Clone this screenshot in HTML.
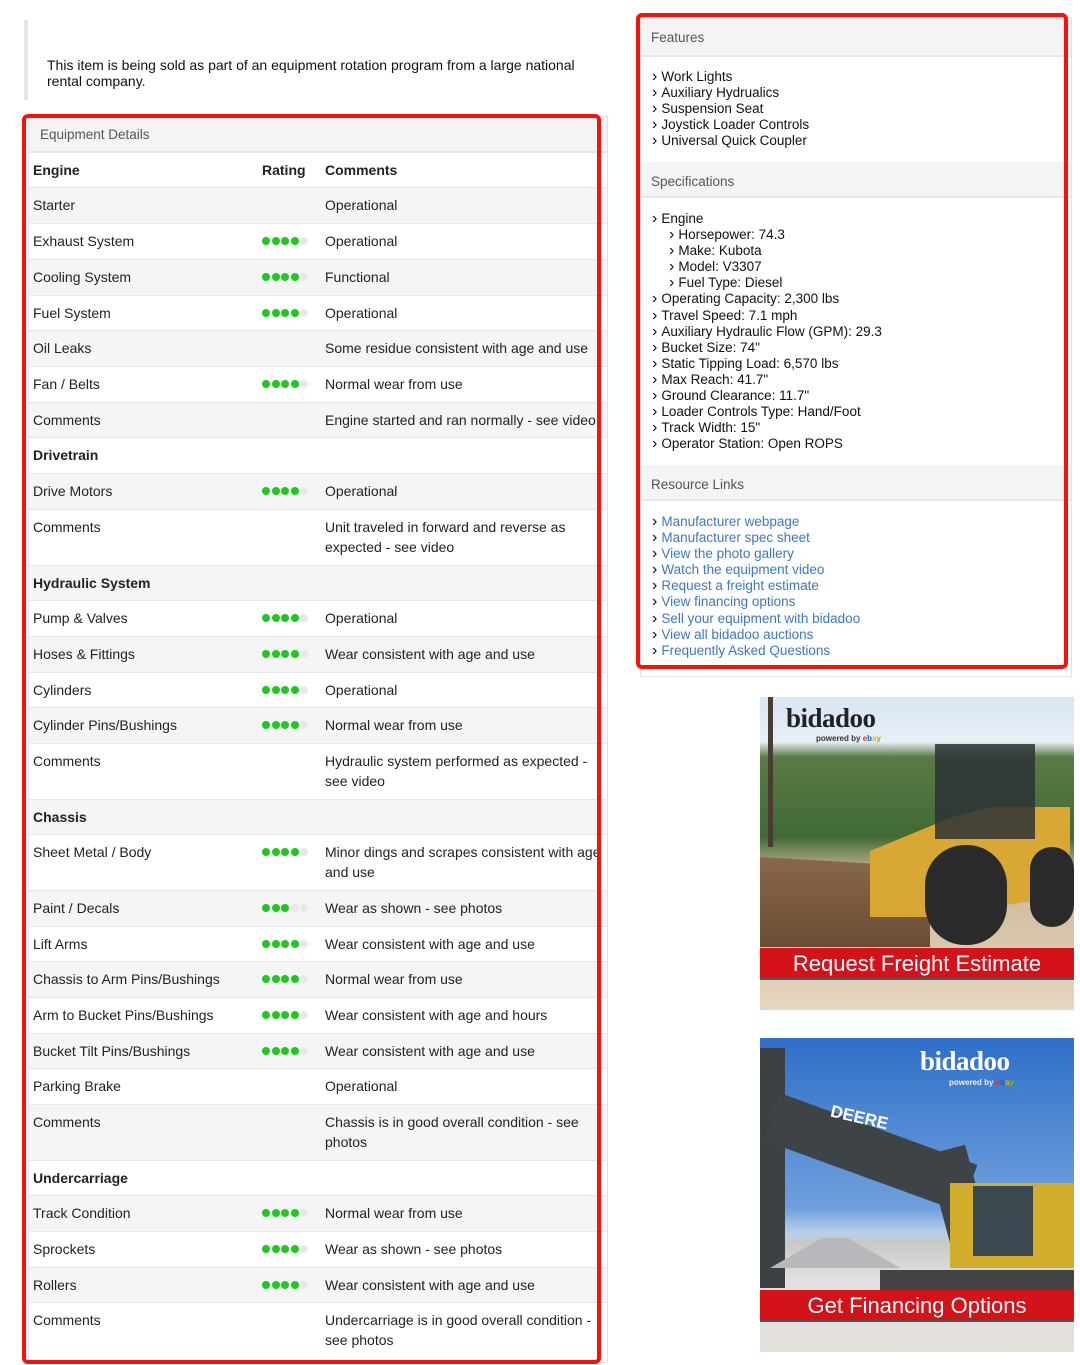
<!DOCTYPE html>
<html><head><meta charset="utf-8"><style>
*{box-sizing:border-box;margin:0;padding:0}
body{width:1080px;height:1365px;background:#fff;font-family:"Liberation Sans",sans-serif;color:#222;position:relative;overflow:hidden;font-size:14px}
.abs{position:absolute}
.intro{left:24px;top:20px;width:4px;height:80px;background:#e6e6e6}
.introt{left:47px;top:57px;width:560px;font-size:14px;line-height:16px;color:#111}
.eq{left:28px;top:116px;width:580px;height:1247px;border:1px solid #e2e2e2;overflow:hidden}
.ph{height:36px;background:#f4f4f4;border-bottom:2px solid #e4e4e4;color:#555;font-size:13.5px;padding:10px 0 0 11px}
.r{position:relative;height:36px;border-top:1px solid #e6e6e6;padding:7px 0 0 4px;line-height:20px;font-size:14px;white-space:nowrap}
.r.g{background:#f5f5f5}
.r.t{height:56px}
.r b{font-weight:bold}
.r .c{position:absolute;left:296px;top:7px;width:268px;white-space:normal}
.r .d{position:absolute;left:233px;top:13px}
.d i{display:inline-block;width:8px;height:8px;border-radius:50%;background:#1ec81e;margin-right:1.5px;vertical-align:top}
.d i.o{background:#e8e8e8}
.red{border:4px solid #f2140c;border-radius:6px}
.rp{left:640px;top:17px;width:432px;height:660px;border:1px solid #e2e2e2;overflow:hidden}
.rh{height:36px;background:#f4f4f4;border-bottom:2px solid #e6e6e6;color:#555;font-size:13.5px;padding:12px 0 0 10px}
.ls{padding:13px 0 12px 11px;font-size:13.5px;color:#111}
.ls div{height:16.1px;line-height:16.1px;white-space:nowrap}
.ls div::before{content:"›";font-size:16px;line-height:16px;margin-right:4px}
.ls .in{padding-left:17px}
.ls a{color:#3b78c0;text-decoration:none}
.img{overflow:hidden}
.band{position:absolute;left:0;width:100%;height:32px;background:#d3121a;color:#fff;text-align:center;font-size:22px;line-height:32px;border-bottom:2px solid #555}
.logo{position:absolute;font-family:"Liberation Serif",serif;font-weight:bold;font-size:27px;letter-spacing:-0.5px}
.pb{position:absolute;font-size:8px;font-weight:bold}
</style></head><body>
<div class="abs intro"></div>
<div class="abs introt">This item is being sold as part of an equipment rotation program from a large national rental company.</div>

<div class="abs eq">
<div class="ph">Equipment Details</div>
<div class="r" style="height:34px;border-top:none"><b>Engine</b><b class="d" style="top:7px;left:233px">Rating</b><b class="c">Comments</b></div>
<div class="r g">Starter<span class="c">Operational</span></div>
<div class="r">Exhaust System<span class="d"><i></i><i></i><i></i><i></i><i class="o"></i></span><span class="c">Operational</span></div>
<div class="r g">Cooling System<span class="d"><i></i><i></i><i></i><i></i><i class="o"></i></span><span class="c">Functional</span></div>
<div class="r" style="height:35px">Fuel System<span class="d"><i></i><i></i><i></i><i></i><i class="o"></i></span><span class="c">Operational</span></div>
<div class="r g">Oil Leaks<span class="c" style="width:300px">Some residue consistent with age and use</span></div>
<div class="r">Fan / Belts<span class="d"><i></i><i></i><i></i><i></i><i class="o"></i></span><span class="c">Normal wear from use</span></div>
<div class="r g" style="height:35px">Comments<span class="c" style="white-space:nowrap">Engine started and ran normally - see video</span></div>
<div class="r"><b>Drivetrain</b></div>
<div class="r g">Drive Motors<span class="d"><i></i><i></i><i></i><i></i><i class="o"></i></span><span class="c">Operational</span></div>
<div class="r t">Comments<span class="c">Unit traveled in forward and reverse as expected - see video</span></div>
<div class="r g" style="height:35px"><b>Hydraulic System</b></div>
<div class="r">Pump &amp; Valves<span class="d"><i></i><i></i><i></i><i></i><i class="o"></i></span><span class="c">Operational</span></div>
<div class="r g">Hoses &amp; Fittings<span class="d"><i></i><i></i><i></i><i></i><i class="o"></i></span><span class="c">Wear consistent with age and use</span></div>
<div class="r" style="height:35px">Cylinders<span class="d"><i></i><i></i><i></i><i></i><i class="o"></i></span><span class="c">Operational</span></div>
<div class="r g">Cylinder Pins/Bushings<span class="d"><i></i><i></i><i></i><i></i><i class="o"></i></span><span class="c">Normal wear from use</span></div>
<div class="r t">Comments<span class="c" style="width:266px">Hydraulic system performed as expected - see video</span></div>
<div class="r g" style="height:35px"><b>Chassis</b></div>
<div class="r t">Sheet Metal / Body<span class="d"><i></i><i></i><i></i><i></i><i class="o"></i></span><span class="c" style="width:292px">Minor dings and scrapes consistent with age and use</span></div>
<div class="r g">Paint / Decals<span class="d"><i></i><i></i><i></i><i class="o"></i><i class="o"></i></span><span class="c">Wear as shown - see photos</span></div>
<div class="r" style="height:35px">Lift Arms<span class="d"><i></i><i></i><i></i><i></i><i class="o"></i></span><span class="c">Wear consistent with age and use</span></div>
<div class="r g">Chassis to Arm Pins/Bushings<span class="d"><i></i><i></i><i></i><i></i><i class="o"></i></span><span class="c">Normal wear from use</span></div>
<div class="r">Arm to Bucket Pins/Bushings<span class="d"><i></i><i></i><i></i><i></i><i class="o"></i></span><span class="c">Wear consistent with age and hours</span></div>
<div class="r g" style="height:35px">Bucket Tilt Pins/Bushings<span class="d"><i></i><i></i><i></i><i></i><i class="o"></i></span><span class="c">Wear consistent with age and use</span></div>
<div class="r">Parking Brake<span class="c">Operational</span></div>
<div class="r g t">Comments<span class="c">Chassis is in good overall condition - see photos</span></div>
<div class="r" style="height:35px"><b>Undercarriage</b></div>
<div class="r g">Track Condition<span class="d"><i></i><i></i><i></i><i></i><i class="o"></i></span><span class="c">Normal wear from use</span></div>
<div class="r">Sprockets<span class="d"><i></i><i></i><i></i><i></i><i class="o"></i></span><span class="c">Wear as shown - see photos</span></div>
<div class="r g" style="height:35px">Rollers<span class="d"><i></i><i></i><i></i><i></i><i class="o"></i></span><span class="c">Wear consistent with age and use</span></div>
<div class="r t">Comments<span class="c" style="width:274px">Undercarriage is in good overall condition - see photos</span></div>
</div>
<div class="abs red" style="left:22px;top:114px;width:579px;height:1250px"></div>

<div class="abs rp">
<div class="rh" style="padding-top:12px;height:39px">Features</div>
<div class="ls" style="padding-top:12px;height:105px">
<div>Work Lights</div><div>Auxiliary Hydrualics</div><div>Suspension Seat</div><div>Joystick Loader Controls</div><div>Universal Quick Coupler</div></div>
<div class="rh">Specifications</div>
<div class="ls" style="height:267px">
<div>Engine</div><div class="in">Horsepower: 74.3</div><div class="in">Make: Kubota</div><div class="in">Model: V3307</div><div class="in">Fuel Type: Diesel</div>
<div>Operating Capacity: 2,300 lbs</div><div>Travel Speed: 7.1 mph</div><div>Auxiliary Hydraulic Flow (GPM): 29.3</div><div>Bucket Size: 74"</div><div>Static Tipping Load: 6,570 lbs</div><div>Max Reach: 41.7"</div><div>Ground Clearance: 11.7"</div><div>Loader Controls Type: Hand/Foot</div><div>Track Width: 15"</div><div>Operator Station: Open ROPS</div></div>
<div class="rh">Resource Links</div>
<div class="ls">
<div><a>Manufacturer webpage</a></div><div><a>Manufacturer spec sheet</a></div><div><a>View the photo gallery</a></div><div><a>Watch the equipment video</a></div><div><a>Request a freight estimate</a></div><div><a>View financing options</a></div><div><a>Sell your equipment with bidadoo</a></div><div><a>View all bidadoo auctions</a></div><div><a>Frequently Asked Questions</a></div></div>
</div>
<div class="abs red" style="left:636px;top:13px;width:432px;height:656px"></div>

<div class="abs img" style="left:760px;top:697px;width:314px;height:313px;background:linear-gradient(#d6e6f3 0,#e8eef4 45px,#5c7a45 60px,#3f6a35 140px,#cbb89a 175px,#e6d6bf 313px)">
<div class="abs" style="left:8px;top:0;width:5px;height:150px;background:#4a3c30"></div>
<div class="abs" style="left:0;top:150px;width:170px;height:100px;background:linear-gradient(#8b6b4f,#6b4d36);clip-path:polygon(0 10%,100% 20%,100% 100%,0 100%)"></div>
<div class="abs" style="left:110px;top:110px;width:200px;height:110px;background:#d9a733;clip-path:polygon(0 40%,40% 10%,60% 0,100% 0,100% 80%,30% 100%,0 100%)"></div>
<div class="abs" style="left:175px;top:47px;width:100px;height:95px;background:#2d3336;opacity:.85"></div>
<div class="abs" style="left:165px;top:148px;width:82px;height:100px;border-radius:40px;background:#2a2a2a"></div>
<div class="abs" style="left:270px;top:150px;width:44px;height:80px;border-radius:25px;background:#2a2a2a"></div>
<div class="logo" style="left:26px;top:6px;color:#222">bidadoo</div>
<div class="pb" style="left:56px;top:37px;color:#333">powered by <span style="color:#e53238">e</span><span style="color:#0064d2">b</span><span style="color:#f5af02">a</span><span style="color:#86b817">y</span></div>
<div class="band" style="top:251px">Request Freight Estimate</div>
</div>

<div class="abs img" style="left:760px;top:1038px;width:314px;height:314px;background:linear-gradient(#2f6fc9 0,#6fa0dc 170px,#b9d0ea 195px,#c8c8c8 205px,#e0e0e2 240px,#e4e0da 314px)">
<div class="abs" style="left:0;top:10px;width:25px;height:240px;background:#3c4144"></div>
<div class="abs" style="left:20px;top:55px;width:210px;height:50px;background:#3d4347;transform-origin:0 0;transform:rotate(20deg)"></div>
<div class="abs" style="left:180px;top:110px;width:40px;height:110px;background:#3d4347;transform:rotate(-15deg)"></div>
<div class="abs" style="left:10px;top:200px;width:130px;height:30px;background:#b8b8bc;clip-path:polygon(0 100%,40% 0,60% 0,100% 100%)"></div>
<div class="abs" style="left:190px;top:145px;width:124px;height:85px;background:#d2ad2c"></div>
<div class="abs" style="left:213px;top:148px;width:60px;height:70px;background:#3b4850"></div>
<div class="abs" style="left:120px;top:232px;width:194px;height:22px;background:#444"></div>
<div class="abs" style="left:70px;top:70px;color:#fff;font-weight:bold;font-size:17px;transform:rotate(13deg)">DEERE</div>
<div class="logo" style="left:160px;top:8px;color:#fff">bidadoo</div>
<div class="pb" style="left:189px;top:40px;color:#eee">powered by <span style="color:#e53238">e</span><span style="color:#0064d2">b</span><span style="color:#f5af02">a</span><span style="color:#86b817">y</span></div>
<div class="band" style="top:252px">Get Financing Options</div>
</div>
</body></html>
